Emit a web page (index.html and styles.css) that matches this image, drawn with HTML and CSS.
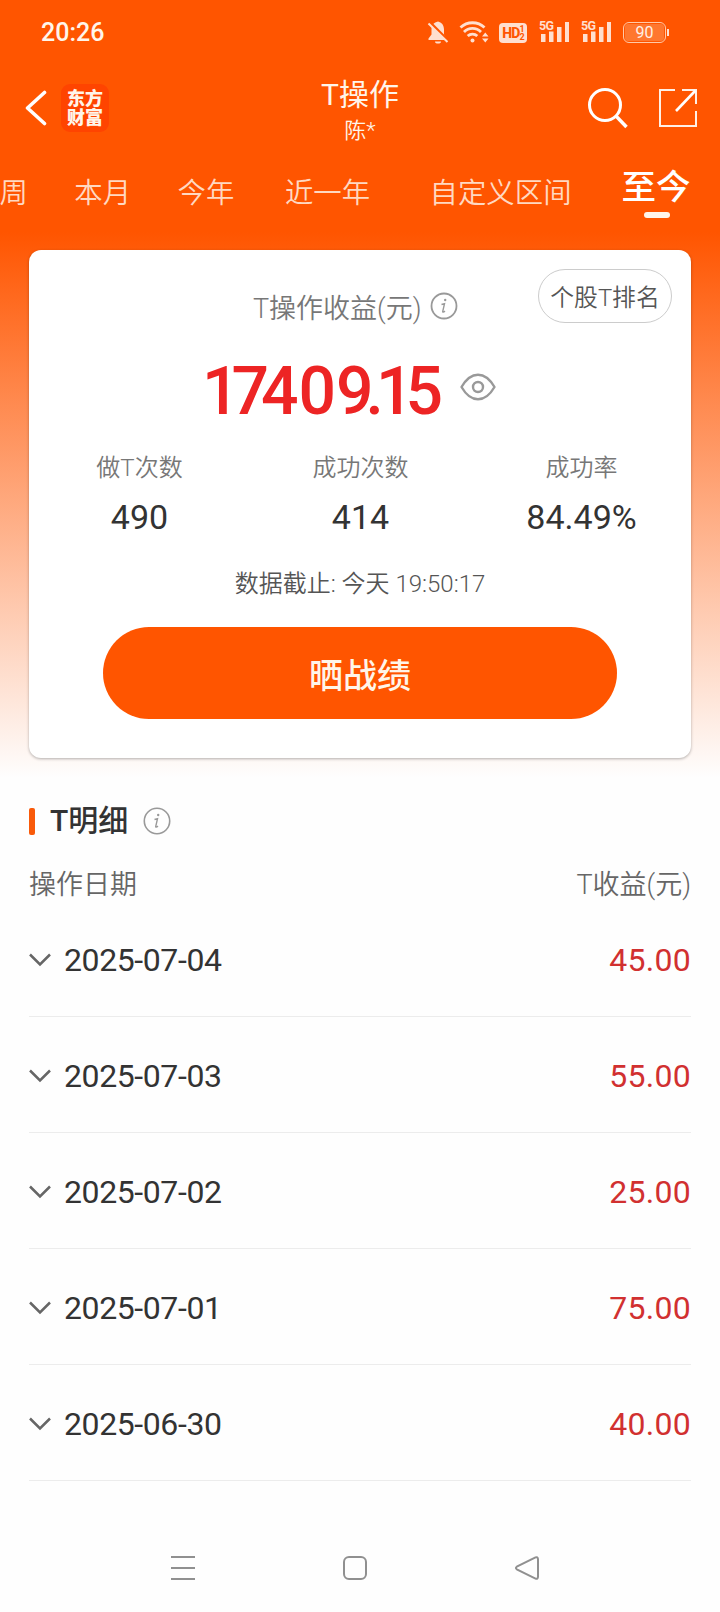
FILE: index.html
```html
<!DOCTYPE html>
<html lang="zh-CN">
  <head>
    <meta charset="UTF-8" />
    <meta name="viewport" content="width=device-width, initial-scale=1.0" />
    <title>T操作</title>
    <link rel="stylesheet" href="styles.css">
  </head>
  <body>
    <div class="top">
      <div class="status-bar">
        <span class="time">20:26</span>
        <div class="status-icons">
          <svg class="bell" width="22" height="24" viewBox="0 0 22 24">
            <path d="M11 1.500c-4 .8-6.500 3.500-6.500 8v5L1.500 18.500v1.500h18v-1.500l-2.500-4v-5c0-4.500-2.500-7.200-6-8z" fill="#ffdfcf"/>
            <path d="M8 21.500h6a3 2 0 0 1-6 0z" fill="#ffdfcf"/>
            <path d="M3 2.500L22 21.500" stroke="#ff5500" stroke-width="3"/>
            <path d="M1.500 3.500L20.500 22" stroke="#ffdfcf" stroke-width="2"/>
          </svg>
          <svg class="wifi" width="30" height="24" viewBox="0 0 30 24" fill="none" stroke="#ffdfcf" stroke-width="2.800">
            <path d="M1.500 7.500a17.500 17.500 0 0 1 24 0"/>
            <path d="M5 12a12 12 0 0 1 17 0"/>
            <path d="M8.700 16a7 7 0 0 1 9.600 0"/>
            <circle cx="13.500" cy="20.500" r="2" fill="#ffdfcf" stroke="none"/>
            <path d="M23 16.500l3.300-4 3.200 4zM23 18.500l3.300 4 3.200-4z" fill="#ffdfcf" stroke="none"/>
          </svg>
          <div class="hd"><b>HD</b><span><i>1</i><i>2</i></span></div>
          <div class="signal">
            <span>5G</span>
            <svg width="30" height="20" viewBox="0 0 30 20" fill="#ffdfcf"><path d="M2 12h4.500v8H2zM10 9.500h4.500V20H10zM18 5h4.500v15H18zM26 0h4v20h-4z"/></svg>
          </div>
          <div class="signal">
            <span>5G</span>
            <svg width="30" height="20" viewBox="0 0 30 20" fill="#ffdfcf"><path d="M2 12h4.500v8H2zM10 9.500h4.500V20H10zM18 5h4.500v15H18zM26 0h4v20h-4z"/></svg>
          </div>
          <div class="battery"><div>90</div></div>
        </div>
      </div>

      <div class="header">
        <div class="header-left">
          <svg width="22" height="36" viewBox="0 0 22 36" fill="none" stroke="#fff" stroke-width="3.600" stroke-linecap="round" stroke-linejoin="round"><path d="M19.500 2.500L2.500 18l17 15.500"/></svg>
          <div class="logo">东方<br>财富</div>
        </div>
        <div class="title">
          <h1>T操作</h1>
          <p>陈*</p>
        </div>
        <div class="header-right">
          <svg width="42" height="42" viewBox="0 0 42 42" fill="none" stroke="#fff" stroke-width="3"><circle cx="18" cy="18" r="15.500"/><path d="M28.500 28.500L39.500 40" stroke-width="3.400"/></svg>
          <svg width="40" height="40" viewBox="0 0 40 40" fill="none" stroke="#fff0e6" stroke-width="2"><path d="M17 2H2v36h36V23M24 2h14v14"/><path d="M37.500 2.500L18 23" stroke="#fff" stroke-width="2.600"/></svg>
        </div>
      </div>

      <div class="tabs">
        <span>本周</span>
        <span>本月</span>
        <span>今年</span>
        <span class="year">近一年</span>
        <span class="custom">自定义区间</span>
        <span class="active">至今</span>
      </div>

      <div class="card">
        <a class="rank">个股T排名</a>
        <div class="card-title">
          <span>T操作收益(元)</span>
          <svg width="28" height="28" viewBox="0 0 28 28"><circle cx="14" cy="14" r="12.500" fill="none" stroke="#999" stroke-width="1.800"/><circle cx="15.200" cy="8" r="1.200" fill="#999"/><path d="M11.500 12.500l3-.8-1.800 8c-.1.700.6.700 2.300-.6" fill="none" stroke="#999" stroke-width="1.400"/></svg>
        </div>
        <div class="profit">
          <span><b>17</b>40<b>9.1</b>5</span>
          <svg width="36" height="28" viewBox="0 0 36 28" fill="none" stroke="#999" stroke-width="2.400"><path d="M1.500 14C11-2.400 25-2.400 34.500 14 25 30.400 11 30.400 1.500 14z" stroke-linejoin="round"/><circle cx="18" cy="14" r="5"/></svg>
        </div>
        <div class="stats">
          <div><p>做T次数</p><strong>490</strong></div>
          <div><p>成功次数</p><strong>414</strong></div>
          <div><p>成功率</p><strong>84.49%</strong></div>
        </div>
        <div class="deadline">数据截止: 今天 19:50:17</div>
        <button>晒战绩</button>
      </div>
    </div>

    <div class="detail">
      <div class="detail-title">
        <h2>T明细</h2>
        <svg width="28" height="28" viewBox="0 0 28 28"><circle cx="14" cy="14" r="12.700" fill="none" stroke="#999" stroke-width="1.600"/><circle cx="15.200" cy="8" r="1.200" fill="#999"/><path d="M11.500 12.500l3-.8-1.800 8c-.1.700.6.700 2.300-.6" fill="none" stroke="#999" stroke-width="1.400"/></svg>
      </div>
      <div class="list-head"><span>操作日期</span><span>T收益(元)</span></div>
      <div class="row">
        <svg class="arrow" width="22" height="14" viewBox="0 0 22 14"><path d="M1 1.500l10 10 10-10"/></svg>
        <span>2025-07-04</span><em>45.00</em>
      </div>
      <div class="row">
        <svg class="arrow" width="22" height="14" viewBox="0 0 22 14"><path d="M1 1.500l10 10 10-10"/></svg>
        <span>2025-07-03</span><em>55.00</em>
      </div>
      <div class="row">
        <svg class="arrow" width="22" height="14" viewBox="0 0 22 14"><path d="M1 1.500l10 10 10-10"/></svg>
        <span>2025-07-02</span><em>25.00</em>
      </div>
      <div class="row">
        <svg class="arrow" width="22" height="14" viewBox="0 0 22 14"><path d="M1 1.500l10 10 10-10"/></svg>
        <span>2025-07-01</span><em>75.00</em>
      </div>
      <div class="row">
        <svg class="arrow" width="22" height="14" viewBox="0 0 22 14"><path d="M1 1.500l10 10 10-10"/></svg>
        <span>2025-06-30</span><em>40.00</em>
      </div>
    </div>

    <div class="nav">
      <svg width="26" height="26" viewBox="0 0 26 26"><path d="M1 2h24M1 13h24M1 24h24"/></svg>
      <svg width="26" height="26" viewBox="0 0 26 26"><rect x="2" y="2" width="22" height="22" rx="5"/></svg>
      <svg width="26" height="26" viewBox="0 0 26 26"><path d="M21.500 2.400L2.800 11.700q-1.800 1.300 0 2.600l18.700 9.300q2.200.8 2.500-1.600V4q-.3-2.400-2.500-1.600z"/></svg>
    </div>
  </body>
</html>
```
FILE: styles.css
```css
* {
  box-sizing: border-box;
  margin: 0;
  padding: 0;
}
body {
  font-family: Roboto, "Noto Sans CJK SC", sans-serif;
  font-weight: 350;
  background-color: #fefefe;
  width: 720px;
  height: 1612px;
  overflow: hidden;
}
svg {
  display: block;
  flex-shrink: 0;
}
.top {
  height: 785px;
  background: linear-gradient(#ff5500 232px, #fefefe 778px);
}

/* status bar */
.status-bar {
  display: flex;
  justify-content: space-between;
  align-items: center;
  height: 64px;
  padding: 0 53px 0 41px;
}
.time {
  color: #fff5ea;
  font-size: 25px;
  font-weight: 500;
}
.status-icons {
  display: flex;
  align-items: center;
  color: #ffdfcf;
}
.wifi {
  margin-left: 10px;
}
.hd {
  display: flex;
  align-items: center;
  justify-content: center;
  width: 28px;
  height: 20px;
  margin: 1px 12px 0 10px;
  border-radius: 4px;
  background-color: #ffdfcf;
  color: #ff5500;
  font-size: 14px;
  letter-spacing: -0.8px;
}
.hd b {
  font-weight: 800;
}
.hd span {
  display: flex;
  flex-direction: column;
}
.hd i {
  font-size: 9px;
  line-height: 8px;
  font-style: normal;
  font-weight: 700;
}
.signal {
  position: relative;
  width: 31px;
  margin-right: 11px;
}
.signal span {
  position: absolute;
  top: -2px;
  left: 0;
  font-size: 12.5px;
  line-height: 12px;
  font-weight: 700;
  letter-spacing: -0.7px;
}
.battery {
  position: relative;
  width: 43px;
  height: 21px;
  padding: 1px;
  margin-right: 1px;
  border: 1.500px solid #ffc9a8;
  border-radius: 6px;
}
.battery::after {
  content: "";
  position: absolute;
  right: -4px;
  top: 6px;
  width: 2px;
  height: 7px;
  background-color: #ffdfcf;
}
.battery div {
  height: 17px;
  border-radius: 3px;
  background-color: #ff772f;
  color: #fff0e6;
  font-size: 16px;
  line-height: 17px;
  font-weight: 400;
  text-align: center;
}

/* header */
.header {
  display: grid;
  grid-template-columns: 1fr 200px 1fr;
  height: 88px;
  color: #fff5ea;
}
.header-left,
.header-right {
  display: flex;
  align-items: center;
  height: 88px;
}
.header-left {
  padding-left: 25px;
}
.logo {
  width: 48px;
  height: 48px;
  margin-left: 14px;
  padding-top: 5px;
  border-radius: 9px;
  background-color: #ff4400;
  font-size: 18px;
  line-height: 19px;
  font-weight: 900;
  text-align: center;
}
.title {
  padding-top: 12px;
  text-align: center;
}
.title h1 {
  font-size: 30px;
  line-height: 38px;
  font-weight: 400;
}
.title p {
  font-size: 22px;
  line-height: 34px;
}
.header-right {
  justify-content: flex-end;
  gap: 29px;
  padding-right: 22px;
}

/* tabs */
.tabs {
  display: flex;
  height: 98px;
  margin-left: -29px;
  color: #ffd9c2;
  font-size: 28.4px;
  line-height: 83px;
  white-space: nowrap;
}
.tabs span {
  margin-right: 46.500px;
}
.tabs .year {
  margin-left: 4px;
}
.tabs .custom {
  margin-left: 13px;
  margin-right: 50px;
}
.tabs .active {
  position: relative;
  margin: 0;
  color: #fff;
  font-size: 34.500px;
  line-height: 71px;
  font-weight: 500;
}
.active::after {
  content: "";
  position: absolute;
  left: 22px;
  top: 60px;
  width: 26px;
  height: 6px;
  border-radius: 3px;
  background-color: #fff5ea;
}

/* card */
.card {
  position: relative;
  width: 662px;
  height: 508px;
  margin: 0 auto;
  padding-top: 36px;
  border-radius: 12px;
  background-color: #fff;
  box-shadow: 0 1px 3px rgba(0, 0, 0, 0.3);
  text-align: center;
}
.rank {
  position: absolute;
  top: 19px;
  right: 19px;
  width: 134px;
  height: 54px;
  border: 1px solid #ccc;
  border-radius: 27px;
  color: #555;
  font-size: 23.8px;
  line-height: 56px;
}
.card-title {
  display: flex;
  align-items: center;
  gap: 8px;
  height: 40px;
  padding-left: 224px;
  color: #777;
  font-size: 27px;
}
.profit {
  display: flex;
  align-items: center;
  height: 121px;
  padding: 10px 0 0 173px;
  color: #ed2424;
  font-size: 66px;
  font-weight: 500;
  text-align: left;
}
.profit span {
  width: 240px;
}
.profit b {
  font-weight: 500;
  letter-spacing: -8px;
}
.profit svg {
  margin: -9px 0 0 18px;
}
.stats {
  display: grid;
  grid-template-columns: repeat(3, 221px);
}
.stats p {
  color: #777;
  font-size: 24px;
  line-height: 43px;
}
.stats strong {
  display: block;
  color: #333;
  font-size: 34px;
  line-height: 55px;
  font-weight: 400;
}
.deadline {
  margin-top: 19px;
  color: #555;
  font-size: 24px;
  line-height: 40px;
}
.card button {
  width: 514px;
  height: 92px;
  margin-top: 23px;
  border: none;
  border-radius: 46px;
  background-color: #ff5500;
  color: #fff5ea;
  font-family: inherit;
  font-size: 34px;
  font-weight: 500;
}

/* detail list */
.detail {
  padding: 13px 29px 0;
}
.detail-title {
  display: flex;
  align-items: center;
  height: 46px;
}
.detail-title h2 {
  display: flex;
  align-items: center;
  margin-right: 15px;
  color: #333;
  font-size: 30px;
  line-height: 44px;
  font-weight: 500;
}
.detail-title h2::before {
  content: "";
  width: 6px;
  height: 27px;
  margin-right: 15px;
  border-radius: 2px;
  background-color: #f95a0a;
}
.list-head {
  display: flex;
  justify-content: space-between;
  align-items: center;
  height: 57px;
  padding-top: 20px;
  color: #666;
  font-size: 27px;
}
.row {
  display: flex;
  align-items: center;
  height: 116px;
  padding-top: 3px;
  border-bottom: 1px solid #ececec;
  color: #333;
  font-size: 32px;
  font-weight: 400;
  letter-spacing: -0.4px;
}
.row span {
  flex: 1;
  margin-left: 13px;
}
.row em {
  color: #d13030;
  font-style: normal;
  letter-spacing: 0.3px;
}
.arrow {
  fill: none;
  stroke: #666;
  stroke-width: 2.500;
}

/* bottom navigation */
.nav {
  display: flex;
  justify-content: space-between;
  padding: 74px 180px 0 170px;
}
.nav svg {
  fill: none;
  stroke: #909090;
  stroke-width: 2;
}
```
